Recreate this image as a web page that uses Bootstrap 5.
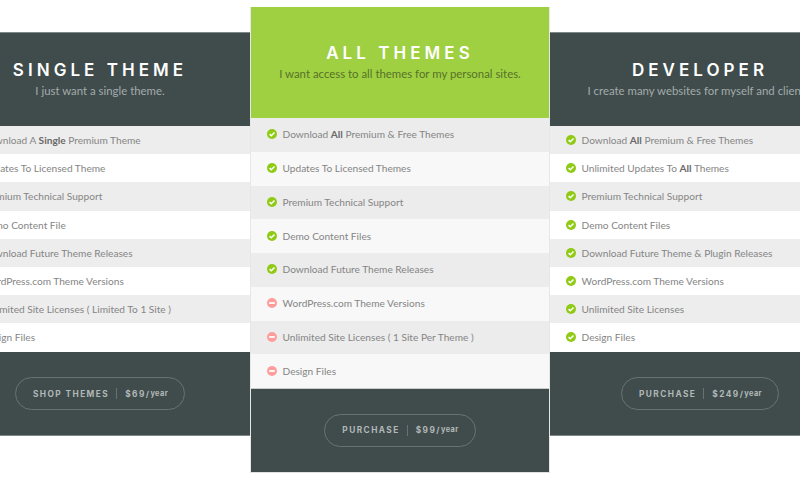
<!DOCTYPE html>
<html lang="en">
<head>
<meta charset="utf-8">
<title>Pricing</title>
<link href="https://cdn.jsdelivr.net/npm/bootstrap@5.3.0/dist/css/bootstrap.min.css" rel="stylesheet">
<style>
html, body { margin: 0; width: 800px; height: 480px; overflow: hidden; background: #fff; }
body { font-family: Lato, "Open Sans", sans-serif; color: #777; }
.stage { width: 900px; margin-left: -50px; }
.plan { width: 300px; flex: none; }
.plan-side { margin-top: 32px; height: 404px; background: #404c4c; border-top: 1px solid #7f8888; border-bottom: 1px solid #7f8888; }
.plan-main { width: 300px; margin-top: 7px; height: 466px; background: #404c4c; border-left: 1px solid #e6e8e8; border-right: 1px solid #e6e8e8; border-bottom: 1px solid #dfe2e2; z-index: 2; }
.plan-head { height: 93px; padding-top: 27px; text-align: center; }
.plan-main .plan-head { height: 111px; padding-top: 36px; background: #9fd041; }
.plan-title { margin: 0; font-family: Inter, sans-serif; font-size: 17px; font-weight: 600; line-height: 21px; letter-spacing: 4.05px; color: #fff; text-transform: uppercase; }
.plan-sub { margin: 2px 0 0; font-size: 11.4px; line-height: 16px; color: #a3abab; white-space: nowrap; }
.plan-main .plan-sub { color: #56722a; }
.feat-list { margin: 0; padding: 0; list-style: none; background: #fff; }
.feat-item { height: 28.2px; padding-left: 16px; padding-top: 1px; font-size: 10.15px; color: #858585; white-space: nowrap; }
.feat-item:nth-child(odd) { background: #ededed; }
.plan-main .feat-list { border-bottom: 1px solid #c9cccc; }
.plan-main .feat-item { height: 33.75px; padding-left: 16px; padding-top: 0; background: #f8f8f8; }
.plan-main .feat-item:nth-child(odd) { background: #ececec; }
.feat-item svg { width: 10px; height: 10px; flex: none; margin-right: 5.5px; margin-top: -1px; }
.feat-item b { font-weight: 700; color: #696969; }
.plan-foot { flex: 1; }
.plan-side .plan-foot { padding-top: 1px; }
.plan-main .plan-foot { padding-bottom: 1px; }
.price-btn { height: 33px; padding: 0 16px 0 17px; border: 1px solid #687272; color: #b2b8b8; font-family: Inter, sans-serif; font-size: 8.3px; font-weight: 700; letter-spacing: 1.45px; line-height: 1; white-space: nowrap; }
.price-btn:hover { color: #b2b8b8; border-color: #687272; }
.price-sep { width: 1px; height: 11px; background: #687272; margin: 0 8px 0 7px; }
.price-per { font-size: 7.4px; letter-spacing: .4px; }
</style>
</head>
<body>
<svg width="0" height="0" class="d-block position-absolute">
  <symbol id="ok" viewBox="0 0 10 10"><circle cx="5" cy="5" r="5" fill="#8fca14"/><path d="M2.6 5.1 4.3 6.8 7.5 3.5" fill="none" stroke="#fff" stroke-width="1.5"/></symbol>
  <symbol id="no" viewBox="0 0 10 10"><circle cx="5" cy="5" r="5" fill="#ff9d9d"/><rect x="2.2" y="4.1" width="5.6" height="1.8" fill="#fff"/></symbol>
</svg>
<div class="stage d-flex align-items-start">
  <section class="plan plan-side d-flex flex-column">
    <div class="plan-head">
      <h2 class="plan-title">Single Theme</h2>
      <p class="plan-sub">I just want a single theme.</p>
    </div>
    <ul class="feat-list">
      <li class="feat-item d-flex align-items-center"><svg><use href="#ok"/></svg><span>Download A <b>Single</b> Premium Theme</span></li>
      <li class="feat-item d-flex align-items-center"><svg><use href="#ok"/></svg><span>Updates To Licensed Theme</span></li>
      <li class="feat-item d-flex align-items-center"><svg><use href="#ok"/></svg><span>Premium Technical Support</span></li>
      <li class="feat-item d-flex align-items-center"><svg><use href="#ok"/></svg><span>Demo Content File</span></li>
      <li class="feat-item d-flex align-items-center"><svg><use href="#ok"/></svg><span>Download Future Theme Releases</span></li>
      <li class="feat-item d-flex align-items-center"><svg><use href="#ok"/></svg><span>WordPress.com Theme Versions</span></li>
      <li class="feat-item d-flex align-items-center"><svg><use href="#ok"/></svg><span>Unlimited Site Licenses ( Limited To 1 Site )</span></li>
      <li class="feat-item d-flex align-items-center"><svg><use href="#ok"/></svg><span>Design Files</span></li>
    </ul>
    <div class="plan-foot d-flex align-items-center justify-content-center">
      <a href="#" class="btn price-btn rounded-pill d-inline-flex align-items-center">SHOP THEMES<span class="price-sep"></span>$69/<span class="price-per">year</span></a>
    </div>
  </section>
  <section class="plan plan-main position-relative d-flex flex-column">
    <div class="plan-head">
      <h2 class="plan-title">All Themes</h2>
      <p class="plan-sub">I want access to all themes for my personal sites.</p>
    </div>
    <ul class="feat-list">
      <li class="feat-item d-flex align-items-center"><svg><use href="#ok"/></svg><span>Download <b>All</b> Premium &amp; Free Themes</span></li>
      <li class="feat-item d-flex align-items-center"><svg><use href="#ok"/></svg><span>Updates To Licensed Themes</span></li>
      <li class="feat-item d-flex align-items-center"><svg><use href="#ok"/></svg><span>Premium Technical Support</span></li>
      <li class="feat-item d-flex align-items-center"><svg><use href="#ok"/></svg><span>Demo Content Files</span></li>
      <li class="feat-item d-flex align-items-center"><svg><use href="#ok"/></svg><span>Download Future Theme Releases</span></li>
      <li class="feat-item d-flex align-items-center"><svg><use href="#no"/></svg><span>WordPress.com Theme Versions</span></li>
      <li class="feat-item d-flex align-items-center"><svg><use href="#no"/></svg><span>Unlimited Site Licenses ( 1 Site Per Theme )</span></li>
      <li class="feat-item d-flex align-items-center"><svg><use href="#no"/></svg><span>Design Files</span></li>
    </ul>
    <div class="plan-foot d-flex align-items-center justify-content-center">
      <a href="#" class="btn price-btn rounded-pill d-inline-flex align-items-center">PURCHASE<span class="price-sep"></span>$99/<span class="price-per">year</span></a>
    </div>
  </section>
  <section class="plan plan-side d-flex flex-column">
    <div class="plan-head">
      <h2 class="plan-title">Developer</h2>
      <p class="plan-sub">I create many websites for myself and clients.</p>
    </div>
    <ul class="feat-list">
      <li class="feat-item d-flex align-items-center"><svg><use href="#ok"/></svg><span>Download <b>All</b> Premium &amp; Free Themes</span></li>
      <li class="feat-item d-flex align-items-center"><svg><use href="#ok"/></svg><span>Unlimited Updates To <b>All</b> Themes</span></li>
      <li class="feat-item d-flex align-items-center"><svg><use href="#ok"/></svg><span>Premium Technical Support</span></li>
      <li class="feat-item d-flex align-items-center"><svg><use href="#ok"/></svg><span>Demo Content Files</span></li>
      <li class="feat-item d-flex align-items-center"><svg><use href="#ok"/></svg><span>Download Future Theme &amp; Plugin Releases</span></li>
      <li class="feat-item d-flex align-items-center"><svg><use href="#ok"/></svg><span>WordPress.com Theme Versions</span></li>
      <li class="feat-item d-flex align-items-center"><svg><use href="#ok"/></svg><span>Unlimited Site Licenses</span></li>
      <li class="feat-item d-flex align-items-center"><svg><use href="#ok"/></svg><span>Design Files</span></li>
    </ul>
    <div class="plan-foot d-flex align-items-center justify-content-center">
      <a href="#" class="btn price-btn rounded-pill d-inline-flex align-items-center">PURCHASE<span class="price-sep"></span>$249/<span class="price-per">year</span></a>
    </div>
  </section>
</div>
</body>
</html>
